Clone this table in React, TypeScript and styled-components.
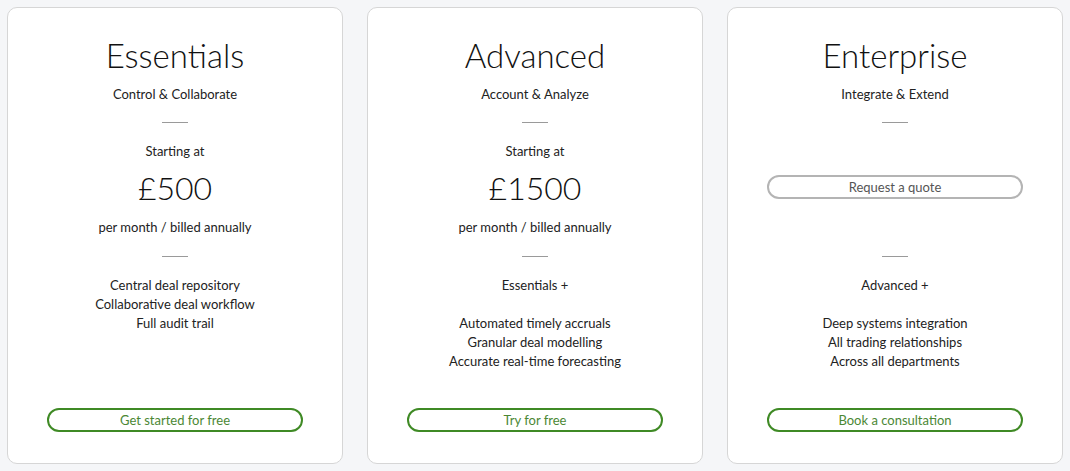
import React from "react";
import styled, { createGlobalStyle } from "styled-components";

const Global = createGlobalStyle`
  html, body { margin: 0; padding: 0; background: #f5f6f8; }
  body { font-family: Lato, "Open Sans", sans-serif; color: #222; }
`;

const Page = styled.div`
  display: grid;
  grid-template-columns: repeat(3, 336px);
  column-gap: 24px;
  padding: 7px 7px 7px 7px;
  width: 1070px;
  height: 471px;
  box-sizing: border-box;
`;

const Card = styled.div`
  background: #fff;
  border: 1px solid #d6d6d6;
  border-radius: 10px;
  display: flex;
  flex-direction: column;
  align-items: center;
  padding: 27px 39px 31px;
  box-sizing: border-box;
  height: 457px;
  text-align: center;
`;

const Title = styled.h2`
  margin: 0;
  font-weight: 300;
  font-size: 33px;
  line-height: 41px;
  color: #111;
`;

const Subtitle = styled.div`
  margin-top: 9px;
  font-size: 13px;
  line-height: 18px;
`;

const Rule = styled.div<{ $top: number }>`
  width: 26px;
  height: 1px;
  background: #9a9a9a;
  margin-top: ${(p) => p.$top}px;
  flex-shrink: 0;
`;

const PriceBlock = styled.div`
  margin-top: 19px;
  height: 94px;
  width: 100%;
  display: flex;
  flex-direction: column;
  align-items: center;
  justify-content: center;
`;

const Small = styled.div`
  font-size: 13px;
  line-height: 18px;
`;

const Price = styled.div`
  font-size: 32px;
  font-weight: 300;
  line-height: 40px;
  margin: 8px 0 10px;
  color: #111;
`;

const Features = styled.ul`
  list-style: none;
  margin: 19px 0 0;
  padding: 0;
  font-size: 13px;
  line-height: 19px;
`;

const Feature = styled.li<{ $gap?: boolean }>`
  margin-bottom: ${(p) => (p.$gap ? "19px" : "0")};
`;

const Button = styled.button<{ $variant: "green" | "grey" }>`
  width: 100%;
  height: 24px;
  border-radius: 12px;
  background: #fff;
  font-family: Lato, "Open Sans", sans-serif;
  font-size: 13px;
  padding: 0;
  cursor: pointer;
  border: ${(p) => (p.$variant === "green" ? "2px solid #3f8a25" : "2px solid #b4b4b4")};
  color: ${(p) => (p.$variant === "green" ? "#4b8734" : "#555")};
  flex-shrink: 0;
`;

const Spacer = styled.div`
  flex: 1;
`;

const QuoteWrap = styled.div`
  width: 100%;
  margin-top: -5px;
`;

type Plan = {
  title: string;
  subtitle: string;
  price?: string;
  base?: string;
  features: string[];
  cta: string;
};

const plans: Plan[] = [
  {
    title: "Essentials",
    subtitle: "Control & Collaborate",
    price: "£500",
    features: ["Central deal repository", "Collaborative deal workflow", "Full audit trail"],
    cta: "Get started for free",
  },
  {
    title: "Advanced",
    subtitle: "Account & Analyze",
    price: "£1500",
    base: "Essentials +",
    features: ["Automated timely accruals", "Granular deal modelling", "Accurate real-time forecasting"],
    cta: "Try for free",
  },
  {
    title: "Enterprise",
    subtitle: "Integrate & Extend",
    base: "Advanced +",
    features: ["Deep systems integration", "All trading relationships", "Across all departments"],
    cta: "Book a consultation",
  },
];

export default function App() {
  return (
    <>
      <Global />
      <Page>
        {plans.map((p) => (
          <Card key={p.title}>
            <Title>{p.title}</Title>
            <Subtitle>{p.subtitle}</Subtitle>
            <Rule $top={19} />
            <PriceBlock>
              {p.price ? (
                <>
                  <Small>Starting at</Small>
                  <Price>{p.price}</Price>
                  <Small>per month / billed annually</Small>
                </>
              ) : (
                <QuoteWrap>
                  <Button $variant="grey">Request a quote</Button>
                </QuoteWrap>
              )}
            </PriceBlock>
            <Rule $top={20} />
            <Features>
              {p.base && <Feature $gap>{p.base}</Feature>}
              {p.features.map((f) => (
                <Feature key={f}>{f}</Feature>
              ))}
            </Features>
            <Spacer />
            <Button $variant="green">{p.cta}</Button>
          </Card>
        ))}
      </Page>
    </>
  );
}
